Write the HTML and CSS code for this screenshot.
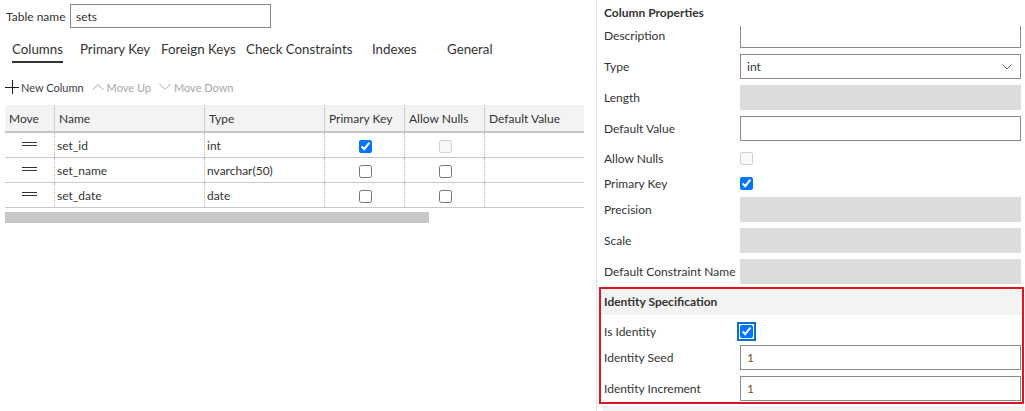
FILE: index.html
```html
<!DOCTYPE html>
<html>
<head>
<meta charset="utf-8">
<title>Table Designer</title>
<link rel="stylesheet" href="styles.css">
</head>
<body>
<div class="app">
  <section class="designer">
    <div class="name-row">
      <span class="name-label">Table name</span>
      <input class="name-input" type="text" value="sets">
    </div>
    <nav class="tabs">
      <span class="tab active">Columns</span>
      <span class="tab">Primary Key</span>
      <span class="tab">Foreign Keys</span>
      <span class="tab">Check Constraints</span>
      <span class="tab">Indexes</span>
      <span class="tab">General</span>
    </nav>
    <div class="toolbar">
      <span class="tool">
        <svg class="tool-icon plus" width="14" height="14" viewBox="0 0 14 14"><path d="M7.5 0V14M0 7.5H14" stroke="#1e1e1e" stroke-width="1" fill="none"/></svg>
        New Column
      </span>
      <span class="tool disabled">
        <svg class="tool-icon chev" width="12" height="8" viewBox="0 0 12 8"><path d="M0.5 7L6 1.5L11.5 7" stroke="#a8a8a8" stroke-width="1" fill="none"/></svg>
        Move Up
      </span>
      <span class="tool disabled">
        <svg class="tool-icon chev" width="12" height="8" viewBox="0 0 12 8"><path d="M0.5 1L6 6.5L11.5 1" stroke="#a8a8a8" stroke-width="1" fill="none"/></svg>
        Move Down
      </span>
    </div>
    <div class="grid">
      <div class="grow head">
        <div class="cell">Move</div>
        <div class="cell">Name</div>
        <div class="cell">Type</div>
        <div class="cell">Primary Key</div>
        <div class="cell">Allow Nulls</div>
        <div class="cell">Default Value</div>
      </div>
      <div class="grow">
        <div class="cell move"><span class="grip"></span></div>
        <div class="cell">set_id</div>
        <div class="cell">int</div>
        <div class="cell center"><input type="checkbox" checked></div>
        <div class="cell center"><input type="checkbox" disabled></div>
        <div class="cell"></div>
      </div>
      <div class="grow">
        <div class="cell move"><span class="grip"></span></div>
        <div class="cell">set_name</div>
        <div class="cell">nvarchar(50)</div>
        <div class="cell center"><input type="checkbox"></div>
        <div class="cell center"><input type="checkbox"></div>
        <div class="cell"></div>
      </div>
      <div class="grow">
        <div class="cell move"><span class="grip"></span></div>
        <div class="cell">set_date</div>
        <div class="cell">date</div>
        <div class="cell center"><input type="checkbox"></div>
        <div class="cell center"><input type="checkbox"></div>
        <div class="cell"></div>
      </div>
    </div>
    <div class="hscroll"><div class="thumb"></div></div>
  </section>

  <aside class="props">
    <div class="props-title">Column Properties</div>
    <div class="props-scroll">
      <div class="props-list">
        <div class="prop"><span class="prop-label">Description</span><input class="field" type="text"></div>
        <div class="prop"><span class="prop-label">Type</span>
          <div class="field select"><span>int</span>
            <svg class="select-chev" width="10" height="6" viewBox="0 0 10 6"><path d="M0.5 0.5L5 5L9.5 0.5" stroke="#6b6b6b" stroke-width="1" fill="none"/></svg>
          </div>
        </div>
        <div class="prop"><span class="prop-label">Length</span><div class="field disabled"></div></div>
        <div class="prop"><span class="prop-label">Default Value</span><input class="field" type="text"></div>
        <div class="checks">
          <div class="prop"><span class="prop-label">Allow Nulls</span><input class="prop-check" type="checkbox" disabled></div>
          <div class="prop"><span class="prop-label">Primary Key</span><input class="prop-check" type="checkbox" checked></div>
        </div>
        <div class="prop"><span class="prop-label">Precision</span><div class="field disabled"></div></div>
        <div class="prop"><span class="prop-label">Scale</span><div class="field disabled"></div></div>
        <div class="prop"><span class="prop-label">Default Constraint Name</span><div class="field disabled"></div></div>

        <div class="group highlighted">
          <div class="group-title">Identity Specification</div>
          <div class="prop check-row"><span class="prop-label">Is Identity</span><input class="prop-check focused" type="checkbox" checked></div>
          <div class="prop"><span class="prop-label">Identity Seed</span><input class="field value" type="text" value="1"></div>
          <div class="prop"><span class="prop-label">Identity Increment</span><input class="field value" type="text" value="1"></div>
        </div>
        <div class="group-next"></div>
      </div>
    </div>
  </aside>
</div>
</body>
</html>
```

FILE: styles.css
```css
html, body {
  margin: 0;
  padding: 0;
  height: 100%;
}

body {
  font-family: Lato, "Noto Sans", sans-serif;
  font-size: 12px;
  color: #333;
  background: #fff;
  overflow: hidden;
}

input {
  font-family: inherit;
  font-size: 12px;
}

.app {
  display: flex;
  height: 411px;
}

/* ---------- left: designer ---------- */
.designer {
  flex: none;
  width: 596px;
  border-right: 1px solid #e3e3e3;
}

.name-row {
  display: flex;
  align-items: center;
  height: 24px;
  padding: 4px 0 0 6px;
}

.name-label {
  width: 64px;
  white-space: nowrap;
}

.name-input {
  box-sizing: border-box;
  width: 201px;
  height: 24px;
  margin: 0;
  padding: 0 5px;
  border: 1px solid #8a8a8a;
  color: #333;
  outline: none;
}

.tabs {
  display: grid;
  grid-template-columns: 68px 81px 85px 126px 75px auto;
  margin: 8px 0 0 12px;
  height: 27px;
  font-size: 13.3px;
}

.tab {
  justify-self: start;
  box-sizing: border-box;
  height: 27px;
  padding-top: 4px;
  line-height: 18px;
  color: #333;
  white-space: nowrap;
}

.tab.active {
  border-bottom: 2px solid #333;
}

.toolbar {
  display: flex;
  align-items: center;
  height: 18px;
  margin-top: 15px;
  padding-left: 5px;
  font-size: 11px;
}

.tool {
  display: flex;
  align-items: center;
  color: #3c3c46;
  margin-right: 8px;
  white-space: nowrap;
}

.tool.disabled {
  color: #a8a8a8;
}

.tool-icon.plus {
  margin-right: 2px;
}

.tool-icon.chev {
  margin-right: 3px;
}

.grid {
  width: 579px;
  margin: 9px 0 0 5px;
}

.grow {
  display: grid;
  grid-template-columns: 49px 150px 120px 80px 80px 100px;
  box-sizing: border-box;
  height: 25px;
  border-bottom: 1px solid #c8c8c8;
}

.grow.head {
  height: 28px;
  background: #f3f3f3;
  border-bottom: 2px solid #c6c6c6;
}

.cell {
  display: flex;
  align-items: center;
  box-sizing: border-box;
  padding-left: 2px;
  border-left: 1px dotted #b8b8b8;
  white-space: nowrap;
  overflow: hidden;
}

.cell:first-child {
  border-left: none;
}

.head .cell {
  padding-left: 4px;
  border-left: 1px solid #d0d0d0;
}

.head .cell:first-child {
  border-left: none;
}

.cell.center {
  justify-content: center;
  padding-left: 0;
}

.cell input[type="checkbox"] {
  margin: 2px 0 0 1px;
}

.cell.move {
  justify-content: center;
  padding-left: 0;
}

.grip {
  display: block;
  width: 15px;
  height: 2px;
  border-top: 1px solid #333;
  border-bottom: 1px solid #333;
  margin: 0 0 3px 0;
}

.hscroll {
  width: 579px;
  height: 11px;
  margin: 4px 0 0 5px;
}

.thumb {
  width: 424px;
  height: 11px;
  background: #c8c8c8;
}

/* ---------- right: properties ---------- */
.props {
  flex: 1;
  min-width: 0;
  overflow: hidden;
}

.props-title {
  height: 26px;
  line-height: 26px;
  padding-left: 7px;
  font-weight: bold;
  color: #333;
}

.props-scroll {
  height: 385px;
  overflow: hidden;
}

.props-list {
  display: flex;
  flex-direction: column;
  gap: 6px;
  margin-top: -3px;
}

.prop {
  display: grid;
  grid-template-columns: 136px 281px;
  align-items: center;
  height: 25px;
  padding-left: 7px;
}

.prop-label {
  white-space: nowrap;
  color: #333;
}

.checks {
  margin: -1px 0 -5px 0;
}

.prop-check {
  margin: 0;
  justify-self: start;
}

.field {
  box-sizing: border-box;
  width: 281px;
  height: 25px;
  margin: 0;
  padding: 0 6px;
  border: 1px solid #8a8a8a;
  background: #fff;
  color: #333;
  outline: none;
}

.field.disabled {
  background: #dcdcdc;
  border-color: #dcdcdc;
}

.field.select {
  display: flex;
  align-items: center;
  justify-content: space-between;
  padding-right: 8px;
}

.field.value {
  color: #7a4e28;
}

.group {
  box-sizing: border-box;
  width: 425px;
  margin: -3px 0 0 2px;
  border: 2px solid #e3141f;
}

.group-title {
  height: 26px;
  line-height: 26px;
  padding-left: 3px;
  background: #f3f3f3;
  font-weight: bold;
}

.group .prop {
  padding-left: 3px;
}

.group .prop.check-row {
  height: 28px;
  margin: 2px 0 0 0;
}

.group .prop.check-row + .prop {
  margin-bottom: 6px;
}

.group .prop:last-child {
  margin-bottom: 1px;
}

.prop-check.focused {
  outline: 2px solid #0a6fd6;
  outline-offset: 1px;
}

.group-next {
  height: 20px;
  margin: -4px 0 0 6px;
  background: #f3f3f3;
}
```
